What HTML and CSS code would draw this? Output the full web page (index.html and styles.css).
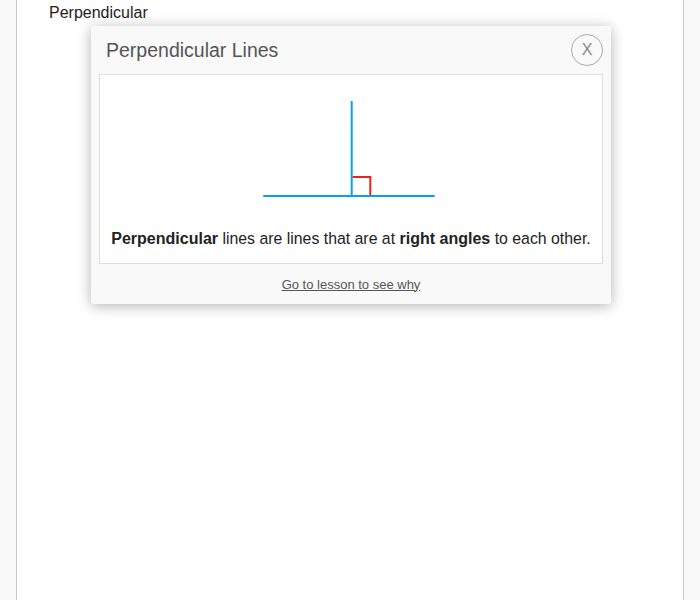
FILE: index.html
```html
<!DOCTYPE html>
<html>
<head>
<meta charset="utf-8">
<link rel="stylesheet" href="styles.css">
</head>
<body>
<div class="column">
  <div class="word">Perpendicular</div>
</div>
<div class="popup">
  <div class="popup-head">
    <span class="popup-title">Perpendicular Lines</span>
    <span class="close">X</span>
  </div>
  <div class="popup-body">
    <svg class="figure" width="502" height="141" viewBox="0 0 502 141">
      <line x1="251.7" y1="26" x2="251.7" y2="121" stroke="#0a9ff0" stroke-width="2"/>
      <line x1="163.3" y1="121" x2="334.7" y2="121" stroke="#0a9ff0" stroke-width="2"/>
      <path d="M252.7 102 H270.3 V120" fill="none" stroke="#ec2415" stroke-width="2"/>
    </svg>
    <p class="def"><b>Perpendicular</b> <span class="reg">lines are lines that are at</span> <b>right angles</b> <span class="reg">to each other.</span></p>
  </div>
  <div class="popup-foot">
    <a class="lesson">Go to lesson to see why</a>
  </div>
</div>
</body>
</html>
```
FILE: styles.css
```css
html, body {
  margin: 0;
  padding: 0;
  background: #f9f9f9;
  font-family: "Liberation Sans", Arial, sans-serif;
}
.column {
  margin: 0 16px;
  height: 600px;
  background: #fff;
  border-left: 1px solid #c8c8c8;
  border-right: 1px solid #c8c8c8;
  padding: 4px 32px 0;
  box-sizing: border-box;
}
.word {
  font-size: 16px;
  color: #222;
}
.popup {
  position: absolute;
  left: 91px;
  top: 26px;
  width: 520px;
  background: #f9f9f9;
  border-radius: 3px;
  box-shadow: 0 2px 14px rgba(0, 0, 0, 0.3);
}
.popup-head {
  height: 48px;
  display: flex;
  align-items: center;
  justify-content: space-between;
  padding: 0 8px 0 15px;
}
.popup-title {
  font-size: 19.5px;
  color: #555;
}
.close {
  width: 30px;
  height: 30px;
  border: 1px solid #aaa;
  border-radius: 50%;
  display: flex;
  align-items: center;
  justify-content: center;
  font-size: 16px;
  color: #888;
}
.popup-body {
  margin: 0 8px;
  background: #fff;
  border: 1px solid #ddd;
}
.figure {
  display: block;
}
.def {
  margin: 14px 0 0;
  padding-bottom: 15px;
  text-align: center;
  font-size: 16px;
  color: #222;
}
.reg {
  font-size: 15.85px;
}
.popup-foot {
  height: 40px;
  display: flex;
  align-items: center;
  justify-content: center;
}
.lesson {
  font-size: 13px;
  color: #555;
  text-decoration: underline;
}
```
